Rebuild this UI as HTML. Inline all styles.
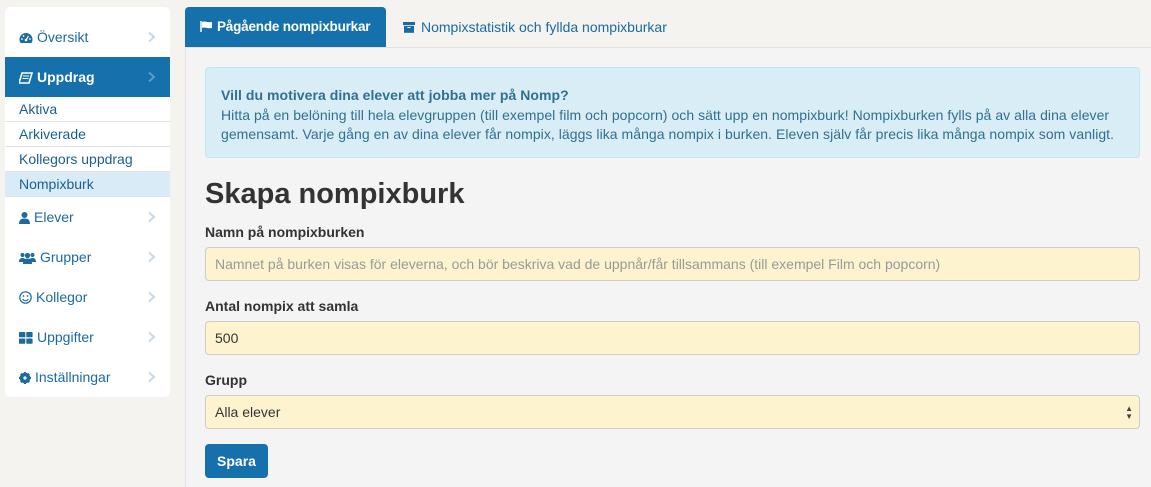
<!DOCTYPE html>
<html><head><meta charset="utf-8"><style>
*{box-sizing:border-box;margin:0;padding:0}
body{width:1151px;height:487px;overflow:hidden;background:#f4f3f0;font-family:"Liberation Sans",sans-serif;font-size:14px;color:#333;position:relative}
.side{position:absolute;left:5px;top:7px;width:165px;height:390px;background:#fff;border-radius:5px;overflow:hidden}
.it{position:absolute;left:0;width:165px;height:40px;color:#1b6aa0;font-size:14px;line-height:40px;padding-left:14px}
.it svg{vertical-align:-2px;margin-right:4px}
.it .ch{position:absolute;right:9px;top:14px;width:12px;height:12px}
.it.act{background:#1570ab;color:#fff;font-weight:bold}
.sub{position:absolute;left:0;width:165px;height:25px;line-height:25px;padding-left:14px;color:#1b5f91;border-bottom:1px solid #e3e3e3;font-size:14px}
.sub.sel{background:#d9ebf7}
.tab1{position:absolute;left:185px;top:7px;width:201px;height:40px;background:#1570ab;border-radius:4px 4px 0 0;color:#fff;font-weight:bold;line-height:40px;padding-left:15px;font-size:13.5px;letter-spacing:-0.2px}
.tab2{position:absolute;left:403px;top:7px;height:40px;line-height:40px;color:#1b6aa0;font-size:14px}
.panel{position:absolute;left:185px;top:47px;right:0;bottom:0;background:#f4f4f4;border-top:1px solid #e2e2e2;border-left:1px solid #e2e2e2}
.alert{position:absolute;left:205px;top:67px;width:935px;height:91px;background:#d9edf7;border:1px solid #bce8f1;border-radius:4px;color:#31708f;padding:18px 15px;line-height:19.5px;font-size:14px;letter-spacing:0.05px}
h1{position:absolute;left:205px;top:178px;font-size:29px;font-weight:bold;color:#333}
.lbl{position:absolute;left:205px;font-weight:bold;font-size:14px}
.inp{position:absolute;left:205px;width:935px;height:34px;background:#fdf4cf;border:1px solid #ccc;border-radius:4px;line-height:32px;padding-left:9px;font-size:14px;color:#333}
.btn{position:absolute;left:205px;top:444px;width:63px;height:34px;background:#1570ab;border-radius:4px;color:#fff;font-weight:bold;line-height:34px;text-align:center;font-size:14px}
</style></head><body>
<div class="side">
<div class="it" style="top:10px"><svg width="14" height="12" viewBox="0 0 14 12"><path d="M7 1A6.5 6.5 0 0 0 .5 7.5c0 1.5.5 3 1.3 3.5h10.4c.8-.5 1.3-2 1.3-3.5A6.5 6.5 0 0 0 7 1z" fill="#1b6aa0"/><circle cx="7" cy="8" r="1.3" fill="#fff"/><path d="M7 8l2.5-4" stroke="#fff" stroke-width="1.2"/><circle cx="3" cy="7" r=".9" fill="#fff"/><circle cx="4.5" cy="4" r=".9" fill="#fff"/><circle cx="11" cy="7" r=".9" fill="#fff"/></svg>Översikt<svg class="ch" viewBox="0 0 12 12"><path d="M4 1.5l5 4.5-5 4.5" fill="none" stroke="#c8d8e4" stroke-width="2"/></svg></div>
<div class="it act" style="top:50px"><svg width="14" height="12" viewBox="0 0 14 12"><path d="M3 1h10l-3 10H0z" fill="none" stroke="#fff" stroke-width="1.6"/><path d="M4 4h6M3.5 6.5h6" stroke="#fff" stroke-width="1"/></svg>Uppdrag<svg class="ch" viewBox="0 0 12 12"><path d="M4 1.5l5 4.5-5 4.5" fill="none" stroke="#5d9ac4" stroke-width="2"/></svg></div>
<div class="sub" style="top:90px">Aktiva</div>
<div class="sub" style="top:115px">Arkiverade</div>
<div class="sub" style="top:140px">Kollegors uppdrag</div>
<div class="sub sel" style="top:165px">Nompixburk</div>
<div class="it" style="top:190px"><svg width="11" height="12" viewBox="0 0 11 12"><circle cx="5.5" cy="3" r="3" fill="#1b6aa0"/><path d="M0 12c0-4 2-5.5 5.5-5.5S11 8 11 12z" fill="#1b6aa0"/></svg>Elever<svg class="ch" viewBox="0 0 12 12"><path d="M4 1.5l5 4.5-5 4.5" fill="none" stroke="#c8d8e4" stroke-width="2"/></svg></div>
<div class="it" style="top:230px"><svg width="17" height="12" viewBox="0 0 17 12"><circle cx="3.5" cy="3" r="2" fill="#1b6aa0"/><circle cx="13.5" cy="3" r="2" fill="#1b6aa0"/><circle cx="8.5" cy="3.5" r="2.6" fill="#1b6aa0"/><path d="M0 10c0-3 1.5-4 3.5-4s3.5 1 3.5 4zM10 10c0-3 1.5-4 3.5-4s3.5 1 3.5 4z" fill="#1b6aa0"/><path d="M4 12c0-4 2-5.5 4.5-5.5S13 8 13 12z" fill="#1b6aa0"/></svg>Grupper<svg class="ch" viewBox="0 0 12 12"><path d="M4 1.5l5 4.5-5 4.5" fill="none" stroke="#c8d8e4" stroke-width="2"/></svg></div>
<div class="it" style="top:270px"><svg width="13" height="13" viewBox="0 0 13 13"><circle cx="6.5" cy="6.5" r="5.7" fill="none" stroke="#1b6aa0" stroke-width="1.2"/><circle cx="4.5" cy="5" r=".9" fill="#1b6aa0"/><circle cx="8.5" cy="5" r=".9" fill="#1b6aa0"/><path d="M3.8 8a3 3 0 0 0 5.4 0" fill="none" stroke="#1b6aa0" stroke-width="1.1"/></svg>Kollegor<svg class="ch" viewBox="0 0 12 12"><path d="M4 1.5l5 4.5-5 4.5" fill="none" stroke="#c8d8e4" stroke-width="2"/></svg></div>
<div class="it" style="top:310px"><svg width="14" height="12" viewBox="0 0 14 12"><rect x="0" y="0" width="6.3" height="5.3" rx=".8" fill="#1b6aa0"/><rect x="7.3" y="0" width="6.3" height="5.3" rx=".8" fill="#1b6aa0"/><rect x="0" y="6.5" width="6.3" height="5.3" rx=".8" fill="#1b6aa0"/><rect x="7.3" y="6.5" width="6.3" height="5.3" rx=".8" fill="#1b6aa0"/></svg>Uppgifter<svg class="ch" viewBox="0 0 12 12"><path d="M4 1.5l5 4.5-5 4.5" fill="none" stroke="#c8d8e4" stroke-width="2"/></svg></div>
<div class="it" style="top:350px"><svg width="12" height="12" viewBox="0 0 12 12"><circle cx="6" cy="6" r="4" fill="none" stroke="#1b6aa0" stroke-width="2.6"/><path d="M6 0v12M0 6h12M1.8 1.8l8.4 8.4M10.2 1.8l-8.4 8.4" stroke="#1b6aa0" stroke-width="2.2"/><circle cx="6" cy="6" r="1.6" fill="#fff"/></svg>Inställningar<svg class="ch" viewBox="0 0 12 12"><path d="M4 1.5l5 4.5-5 4.5" fill="none" stroke="#c8d8e4" stroke-width="2"/></svg></div>
</div>
<div class="tab1"><svg width="13" height="11" viewBox="0 0 13 11" style="vertical-align:-1px;margin-right:4px"><path d="M1 0v11" stroke="#fff" stroke-width="1.5"/><path d="M2 1c3-1.5 5 1 10 0v6c-5 1-7-1.5-10 0z" fill="#fff"/></svg>Pågående nompixburkar</div>
<div class="tab2"><svg width="12" height="11" viewBox="0 0 12 11" style="vertical-align:-1px;margin-right:6px"><rect x="0" y="0" width="12" height="3" fill="#1b6aa0"/><rect x="1" y="3.8" width="10" height="7" fill="#1b6aa0"/><rect x="4.5" y="5" width="3" height="1" fill="#fff"/></svg>Nompixstatistik och fyllda nompixburkar</div>
<div class="panel"></div>
<div class="alert"><b>Vill du motivera dina elever att jobba mer på Nomp?</b><br>Hitta på en belöning till hela elevgruppen (till exempel film och popcorn) och sätt upp en nompixburk! Nompixburken fylls på av alla dina elever gemensamt. Varje gång en av dina elever får nompix, läggs lika många nompix i burken. Eleven själv får precis lika många nompix som vanligt.</div>
<h1>Skapa nompixburk</h1>
<div class="lbl" style="top:224px">Namn på nompixburken</div>
<div class="inp" style="top:247px;color:#999">Namnet på burken visas för eleverna, och bör beskriva vad de uppnår/får tillsammans (till exempel Film och popcorn)</div>
<div class="lbl" style="top:298px">Antal nompix att samla</div>
<div class="inp" style="top:321px">500</div>
<div class="lbl" style="top:372px">Grupp</div>
<div class="inp" style="top:395px">Alla elever<span style="position:absolute;right:6px;top:0;font-size:8px;line-height:8px;padding-top:9px;color:#444">▲<br>▼</span></div>
<div class="btn">Spara</div>
</body></html>
